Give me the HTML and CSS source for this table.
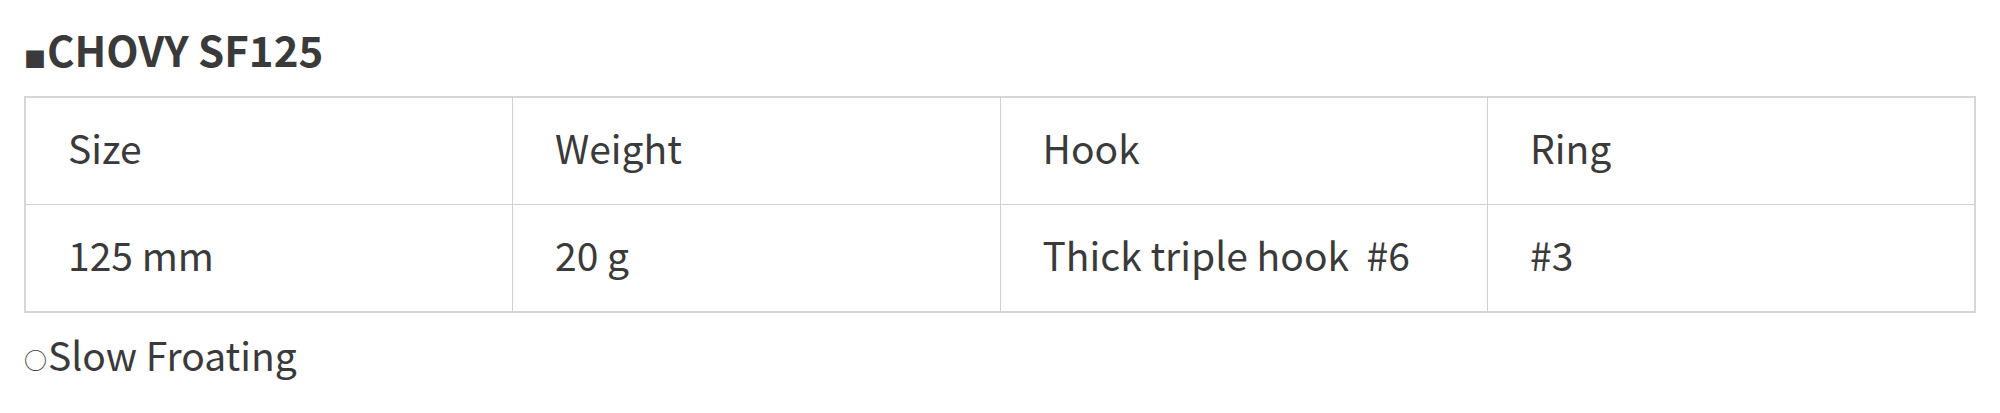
FILE: index.html
```html
<!DOCTYPE html>
<html lang="en">
<head>
<meta charset="utf-8">
<title>CHOVY SF125</title>
<link rel="stylesheet" href="styles.css">
</head>
<body>
<div class="spec">
  <h2 class="spec-title"><span class="sq">■</span>CHOVY SF125</h2>
  <table class="spec-table">
    <tr>
      <td>Size</td>
      <td>Weight</td>
      <td>Hook</td>
      <td>Ring</td>
    </tr>
    <tr>
      <td>125 mm</td>
      <td>20 g</td>
      <td>Thick triple hook&nbsp; #6</td>
      <td>#3</td>
    </tr>
  </table>
  <p class="spec-note"><span class="circ">○</span>Slow Froating</p>
</div>
</body>
</html>
```

FILE: styles.css
```css
html, body {
  margin: 0;
  padding: 0;
  background: #ffffff;
}

.spec {
  padding: 0 24px 40px;
  font-family: "Noto Sans CJK KR", "Noto Sans", sans-serif;
  color: #333333;
}

.spec-title {
  margin: 0;
  height: 96px;
  box-sizing: border-box;
  padding-top: 28px;
  font-size: 42px;
  line-height: 42px;
  font-weight: 700;
  color: #3a3a3a;
  white-space: nowrap;
}

.spec-title .sq {
  font-size: 22px;
  line-height: 1;
  margin-right: 1px;
}

.spec-table {
  width: 100%;
  border-collapse: collapse;
  table-layout: fixed;
  border: 2px solid #d6d6d6;
}

.spec-table td {
  height: 99px;
  padding: 0 0 7px 42px;
  border: 1px solid #d0d0d0;
  font-size: 39px;
  line-height: 1;
  vertical-align: middle;
  color: #3a3a3a;
}

.spec-note {
  margin: 22px 0 0;
  font-size: 39px;
  line-height: 1;
  color: #3a3a3a;
}

.spec-note .circ {
  font-size: 23px;
  line-height: 1;
  margin-right: 1px;
  vertical-align: 2px;
}
```
